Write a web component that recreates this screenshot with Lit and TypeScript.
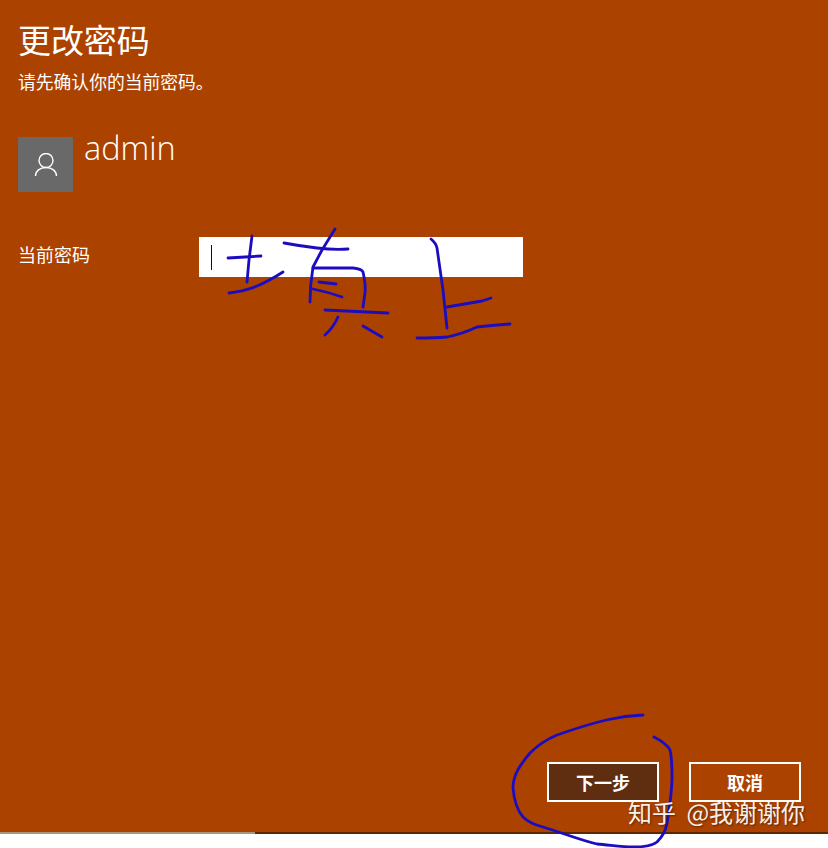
import { LitElement, html, css, svg } from "lit";
import { customElement } from "lit/decorators.js";

const strokes: string[] = [
  "M228 258L245 257L261 256",
  "M252 236L249 260L247 282",
  "M229 293Q245 291 257 286T283 272",
  "M284 243Q300 246 317 248T348 249",
  "M335 229L322 250L313 267Q310 285 310 302",
  "M313 268L353 268Q362 269 363 272Q366 285 365 293L363 307",
  "M319 282L336 284",
  "M313 289Q328 292 342 297",
  "M325 310L388 313",
  "M338 317Q333 328 325 335",
  "M363 326L382 337",
  "M431 239Q436 243 437 248L443 290L447 328",
  "M447 307L482 301L491 298",
  "M417 338Q435 338 447 337Q462 334 477 327Q495 325 510 324",
  "M643 715C620 716 600 720 557 735C545 740 537 746 530 753C520 765 513 775 513 788C514 800 517 810 523 817C528 822 535 825 543 827C560 832 580 840 597 844C610 845 622 847 633 847C645 847 652 846 657 842C663 836 666 830 667 823C670 805 672 790 672 777C672 765 672 758 670 750C667 744 660 740 654 737",
];

@customElement("app-root")
export class AppRoot extends LitElement {
  static styles = css`
    :host {
      display: block;
      position: relative;
      width: 828px;
      height: 848px;
      overflow: hidden;
      background: #fff;
      font-family: "Noto Sans CJK SC", "Liberation Sans", sans-serif;
      color: #fff;
    }
    .panel {
      box-sizing: border-box;
      height: 832px;
      background: #ac4200;
      padding: 17px 27px 30px 18px;
      display: flex;
      flex-direction: column;
    }
    .title {
      font-size: 33px;
      line-height: 44px;
      white-space: nowrap;
      letter-spacing: -0.1px;
    }
    .sub {
      font-size: 17.8px;
      line-height: 24px;
      margin-top: 8px;
      white-space: nowrap;
    }
    .user {
      display: flex;
      gap: 11px;
      margin-top: 44px;
    }
    .avatar {
      width: 55px;
      height: 55px;
      background: #696969;
      display: flex;
      align-items: center;
      justify-content: center;
    }
    .avatar svg {
      display: block;
      width: 24px;
      height: 24px;
    }
    .name {
      font-family: "Open Sans", "Noto Sans", sans-serif;
      font-weight: 300;
      font-size: 32.5px;
      line-height: 22px;
      height: 22px;
    }
    .field {
      display: flex;
      align-items: center;
      margin-top: 45px;
    }
    .label {
      width: 181px;
      height: 40px;
      font-size: 18px;
      line-height: 34px;
      white-space: nowrap;
    }
    .input {
      width: 324px;
      height: 40px;
      background: #fff;
      display: flex;
      align-items: center;
      padding-left: 12px;
      box-sizing: border-box;
    }
    .caret {
      width: 1px;
      height: 25px;
      background: #111;
    }
    .footer {
      margin-top: auto;
      display: flex;
      justify-content: flex-end;
      gap: 30px;
    }
    .btn {
      box-sizing: border-box;
      width: 112px;
      height: 40px;
      border: 2px solid #fff;
      background: transparent;
      color: #fff;
      font-family: inherit;
      font-size: 18px;
      font-weight: 700;
      padding: 0;
    }
    .btn.primary {
      background: #5f2e10;
    }
    .strip {
      display: flex;
      height: 2px;
    }
    .strip .a {
      width: 255px;
      background: #a89580;
    }
    .strip .b {
      flex: 1;
      background: #5c2800;
    }
    .ink {
      position: absolute;
      left: 0;
      top: 0;
      width: 828px;
      height: 848px;
      pointer-events: none;
    }
    .ink path {
      fill: none;
      stroke: #1c0cc0;
      stroke-width: 2.8;
      stroke-linecap: round;
      stroke-linejoin: round;
    }
    .mark {
      position: absolute;
      left: 628px;
      top: 795px;
      font-size: 24px;
      line-height: 34px;
      word-spacing: 5px;
      white-space: nowrap;
      color: #fff;
      text-shadow: 1px 1px 2px rgba(60, 30, 0, 0.8);
      opacity: 0.92;
    }
  `;

  render() {
    return html`
      <div class="panel">
        <div class="title">更改密码</div>
        <div class="sub">请先确认你的当前密码。</div>
        <div class="user">
          <div class="avatar">
            <svg viewBox="0 0 24 24" fill="none" stroke="#fff" stroke-width="1.4">
              <circle cx="12" cy="7.500" r="7"></circle>
              <path d="M1.500 23c0-5 4.500-8.500 10.500-8.500s10.500 3.500 10.500 8.500"></path>
            </svg>
          </div>
          <div class="name">admin</div>
        </div>
        <div class="field">
          <div class="label">当前密码</div>
          <div class="input"><div class="caret"></div></div>
        </div>
        <div class="footer">
          <button class="btn primary">下一步</button>
          <button class="btn">取消</button>
        </div>
      </div>
      <div class="strip"><div class="a"></div><div class="b"></div></div>
      <svg class="ink" viewBox="0 0 828 848">
        ${strokes.map((d) => svg`<path d=${d}></path>`)}
      </svg>
      <div class="mark">知乎 @我谢谢你</div>
    `;
  }
}
